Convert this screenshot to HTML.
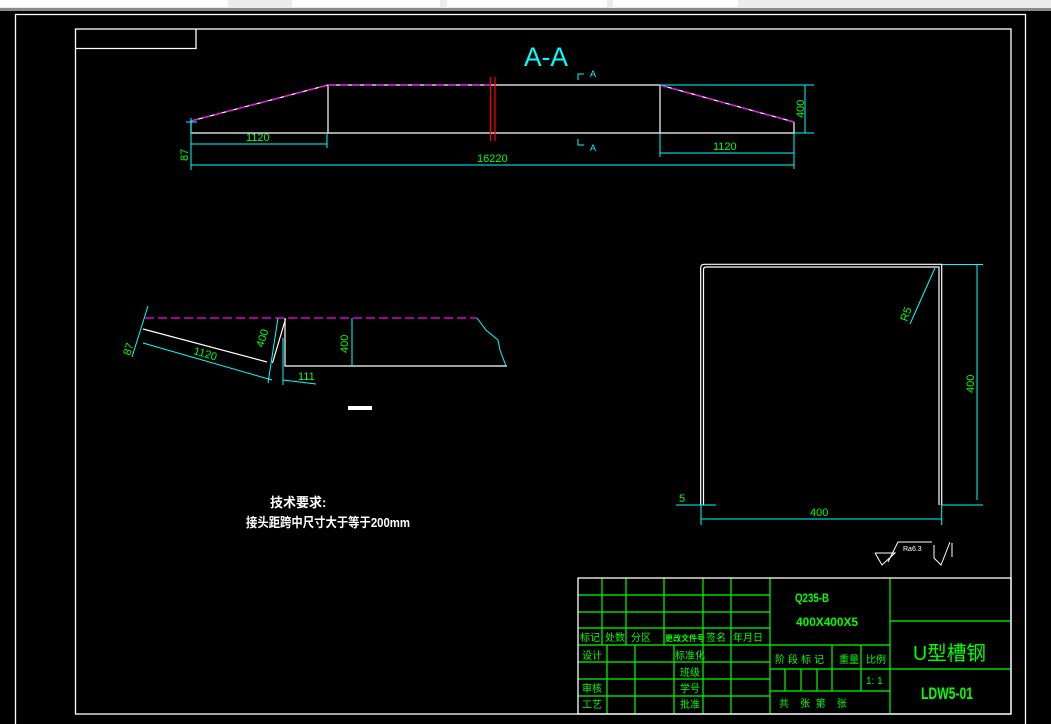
<!DOCTYPE html>
<html><head><meta charset="utf-8"><style>
html,body{margin:0;padding:0;background:#000;overflow:hidden;width:1051px;height:724px;}
svg{display:block}
text{font-family:"Liberation Sans","Noto Sans CJK SC",sans-serif;}
</style></head><body>
<svg width="1051" height="724" viewBox="0 0 1051 724" xmlns="http://www.w3.org/2000/svg">
<rect width="1051" height="724" fill="#000"/>
<!-- toolbar -->
<rect x="0" y="0" width="1051" height="10" fill="#ececec"/>
<rect x="0" y="0" width="228" height="7" fill="#fff"/>
<rect x="292" y="0" width="148" height="7" fill="#fff"/>
<rect x="447" y="0" width="160" height="7" fill="#fff"/>
<rect x="613" y="0" width="125" height="7" fill="#fff"/>
<rect x="0" y="8" width="1051" height="3" fill="#8a8a8a"/>
<!-- frames -->
<g fill="none" stroke="#fff" stroke-width="1.3">
<path d="M15.5 724 V14.5 H1025.5 V724"/>
<rect x="75.5" y="29" width="935.5" height="685"/>
<path d="M75.5 48.5 H196 V29"/>
</g>
<!-- A-A -->
<text x="524" y="66" fill="#00ffff" font-size="27" textLength="44" lengthAdjust="spacingAndGlyphs">A-A</text>
<!-- top view -->
<g stroke="#fff" stroke-width="1.2" fill="none">
<path d="M191 133 H794 M328 85 H660 M328 85 V133 M660 85 V133 M191 121 V133 M794 122 V133"/>
<path d="M191 121 L328 85 M660 85 L794 122"/>
</g>
<g stroke="#ff00ff" stroke-width="1.3" fill="none" stroke-dasharray="8 4">
<path d="M191 121 L328 85 M328 85 H490 M660 85 L794 122"/>
</g>
<path d="M490.5 77 V141 M495 77 V141" stroke="#ff0000" stroke-width="1.2"/>
<g stroke="#00ffff" stroke-width="1" fill="none">
<path d="M191 144 H327 M327 133 V148 M660 153 H794 M660 133 V157 M794 133 V169 M191 165 H794 M191 118 V170 M186 122 H197 M660 85 H814 M794 133 H814 M805 85 V133"/>
<path d="M578 80 V74 H584 M578 139 V145 H584"/>
</g>
<g fill="#00ff00" font-size="11">
<text x="246" y="141">1120</text>
<text x="713" y="150">1120</text>
<text x="477" y="162">16220</text>
<text transform="translate(804,118) rotate(-90)">400</text>
<text transform="translate(188,161) rotate(-90)">87</text>
</g>
<g fill="#00ffff" font-size="9"><text x="590" y="77">A</text><text x="590" y="151">A</text></g>
<!-- lower left -->
<g stroke="#fff" stroke-width="1.2" fill="none">
<path d="M285 318 V366 H507 M143 329 L267 362 M285.5 319 L272.5 363"/>
</g>
<path d="M145 318 H477" stroke="#ff00ff" stroke-width="1.3" stroke-dasharray="9 4"/>
<g stroke="#00ffff" stroke-width="1" fill="none">
<path d="M477 318 L486 330 L498 340 L500 350 L506 366"/>
<path d="M352 318 V366 M148 306 L132 357 M143 343 L272 380 M278 318 L268 383 M283 338 L283 385 M283 380 L316 384"/>
</g>
<g fill="#00ff00" font-size="11">
<text transform="translate(348,353) rotate(-90)">400</text>
<text transform="translate(193,354) rotate(16)">1120</text>
<text transform="translate(130,356) rotate(-72)">87</text>
<text transform="translate(263,348) rotate(-72)">400</text>
<text x="298" y="380">111</text>
</g>
<rect x="348" y="406" width="24" height="4" fill="#fff"/>
<!-- tech requirements -->
<g fill="#fff" font-weight="bold" font-size="13">
<text x="270" y="507">技术要求:</text>
<text x="246" y="527" textLength="164" lengthAdjust="spacingAndGlyphs">接头距跨中尺寸大于等于200mm</text>
</g>
<!-- U shape -->
<g stroke="#fff" stroke-width="1.2" fill="none">
<path d="M700.7 505 V268 Q700.7 264.3 704 264.3 H941.7 V505"/>
<path d="M703.5 505 V270 Q703.5 267 706 267 H939 V505"/>
</g>
<g stroke="#00ffff" stroke-width="1" fill="none">
<path d="M941.7 264.5 H983 M941.7 505 H983 M977 265 V500 M701 505 V525 M941.7 505 V525 M701 519 H941 M676 505 H716 M935 268 L910 324"/>
</g>
<g fill="#00ff00" font-size="11">
<text x="810" y="516">400</text>
<text transform="translate(974,393) rotate(-90)">400</text>
<text x="679" y="502">5</text>
<text transform="translate(907,322) rotate(-70)">R5</text>
</g>
<g stroke="#fff" stroke-width="1" fill="none">
<path d="M875 553 H895 L882 565 L875 553 M888 562 L898 542 H932 M934 545 V558 L941 565 L950 542 M952 543 V557"/>
</g>
<text x="903" y="551" fill="#fff" font-size="7">Ra6.3</text>
<!-- title block -->
<g stroke="#00ff00" stroke-width="1.2" fill="none">
<path d="M578 595 H770 M578 612 H770 M578 628 H770 M578 645 H890 M578 662 H770 M578 679 H770 M578 696 H770"/>
<path d="M602 578 V645 M626 578 V645 M664 578 V645 M703 578 V714 M731 578 V714 M770 578 V714"/>
<path d="M607 645 V714 M635 645 V714 M674 645 V714"/>
<path d="M770 669 H890 M770 691 H890 M832 645 V691 M861 645 V691 M785 669 V691 M801 669 V691 M817 669 V691"/>
<path d="M890 578 V714 M890 621 H1011 M890 669 H1011"/>
</g>
<rect x="578" y="578" width="433" height="136" fill="none" stroke="#fff" stroke-width="1.3"/>
<g fill="#00ff00" font-size="10">
<text x="580" y="641">标记</text><text x="605" y="641">处数</text><text x="631" y="641">分区</text>
<text x="665" y="641" font-size="8" font-weight="bold">更改文件号</text><text x="706" y="641">签名</text><text x="733" y="641">年月日</text>
<text x="582" y="659">设计</text><text x="675" y="659">标准化</text>
<text x="680" y="676">班级</text><text x="582" y="692">审核</text><text x="680" y="692">学号</text>
<text x="582" y="708">工艺</text><text x="680" y="708">批准</text>
<text x="775" y="663" letter-spacing="3">阶段标记</text><text x="839" y="663">重量</text><text x="866" y="663">比例</text>
<text x="866" y="684">1: 1</text>
<text x="779" y="707" xml:space="preserve">共    张  第    张</text>
<text x="795" y="602" font-weight="bold" font-size="12" textLength="34" lengthAdjust="spacingAndGlyphs">Q235-B</text>
<text x="796" y="626" font-weight="bold" font-size="12" textLength="62" lengthAdjust="spacingAndGlyphs">400X400X5</text>
<text x="913" y="660" font-size="20" textLength="73" lengthAdjust="spacingAndGlyphs">U型槽钢</text>
<text x="921" y="699" font-size="17" font-weight="bold" font-family="Liberation Serif" textLength="52" lengthAdjust="spacingAndGlyphs">LDW5-01</text>
</g>
</svg>
</body></html>
